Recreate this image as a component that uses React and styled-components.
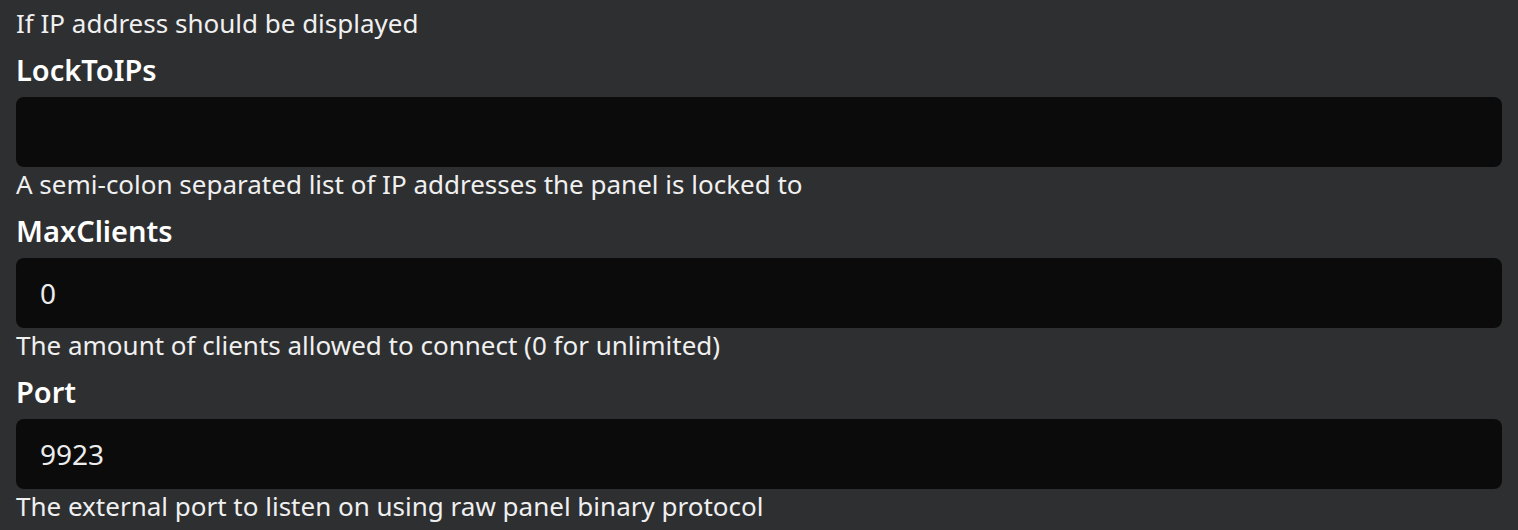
import React from "react";
import styled, { createGlobalStyle } from "styled-components";

const GlobalStyle = createGlobalStyle`
  html, body {
    margin: 0;
    padding: 0;
    background-color: #2e2f31;
  }
  body {
    font-family: "Noto Sans", "DejaVu Sans", sans-serif;
    color: #f2f2f2;
  }
`;

const fields = [
  {
    name: "LockToIPs",
    value: "",
    help: "A semi-colon separated list of IP addresses the panel is locked to",
  },
  {
    name: "MaxClients",
    value: "0",
    help: "The amount of clients allowed to connect (0 for unlimited)",
  },
  {
    name: "Port",
    value: "9923",
    help: "The external port to listen on using raw panel binary protocol",
  },
];

export default function App() {
  return (
    <>
      <GlobalStyle />
      <Page>
        <Help>If IP address should be displayed</Help>
        {fields.map((f) => (
          <Field key={f.name}>
            <Label>{f.name}</Label>
            <Input type="text" defaultValue={f.value} />
            <Help>{f.help}</Help>
          </Field>
        ))}
      </Page>
    </>
  );
}

const Page = styled.div`
  width: 100%;
  height: 530px;
  box-sizing: border-box;
  padding: 6px 16px 0 16px;
  display: flex;
  flex-direction: column;
  overflow: hidden;
`;

const Field = styled.div`
  display: flex;
  flex-direction: column;
`;

const Label = styled.div`
  font-size: 29px;
  font-weight: 600;
  line-height: 54px;
  padding-top: 4px;
  color: #ffffff;
`;

const Input = styled.input`
  box-sizing: border-box;
  width: 100%;
  height: 70px;
  margin: 0;
  border: none;
  border-radius: 8px;
  background-color: #0b0b0b;
  color: #ececec;
  font-family: "Noto Sans", "DejaVu Sans", sans-serif;
  font-size: 28px;
  padding: 0 24px;
  outline: none;
`;

const Help = styled.div`
  font-size: 26px;
  line-height: 32px;
  padding-top: 1px;
  color: #f0f0f0;
  white-space: nowrap;
`;
